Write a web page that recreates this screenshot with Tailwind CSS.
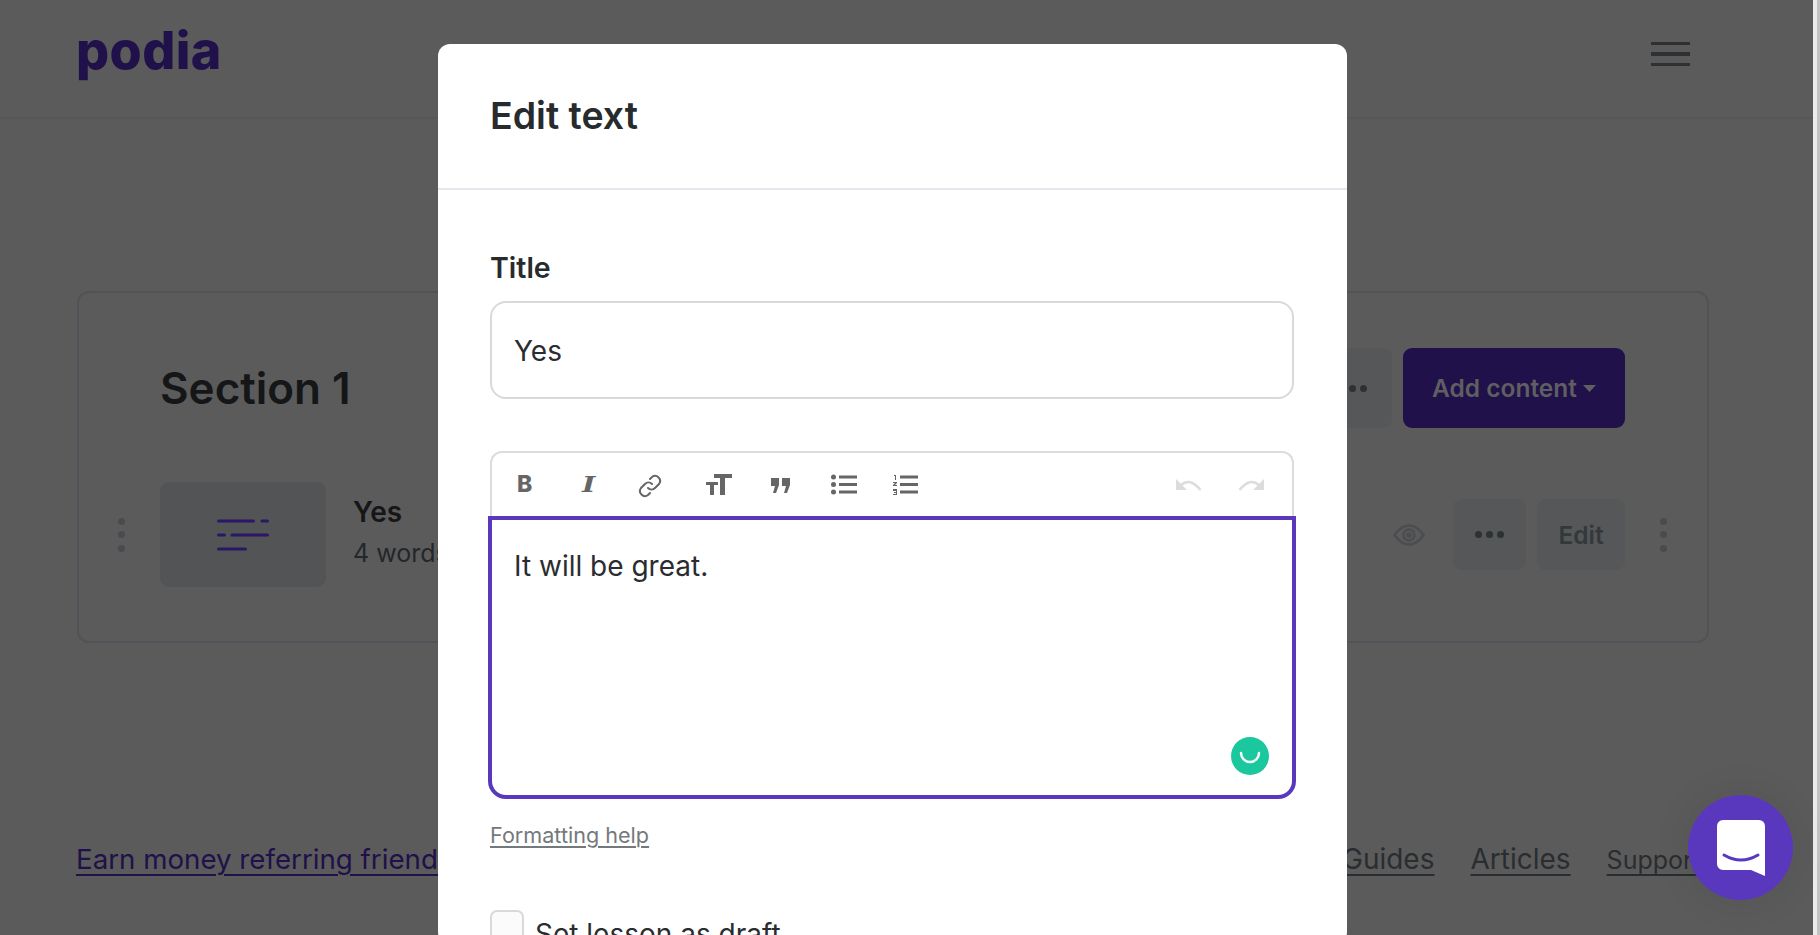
<!DOCTYPE html>
<html lang="en">
<head>
<meta charset="utf-8">
<title>Edit text</title>
<script src="https://cdn.jsdelivr.net/npm/@tailwindcss/browser@4"></script>
</head>
<body class="m-0 h-[935px] w-[1820px] overflow-hidden bg-[#5b5b5b] font-['Inter',sans-serif]">
<div class="relative flex h-[935px] w-[1820px] overflow-hidden">
  <main class="w-[1813px] shrink-0">
    <header class="flex h-[119px] items-start justify-between border-b-2 border-[#56565c] pl-[76px] pr-[123px]">
      <span class="mt-[17px] text-[52px] leading-[68px] font-extrabold tracking-[0.4px] text-[#20114a]">podia</span>
      <div class="mt-[42px] flex w-[39px] flex-col gap-[7px]">
        <span class="h-[3px] bg-[#2e3134]"></span>
        <span class="h-[4px] bg-[#2e3134]"></span>
        <span class="h-[3px] bg-[#2e3134]"></span>
      </div>
    </header>

    <section class="ml-[77px] mt-[172px] h-[352px] w-[1632px] rounded-[12px] border-2 border-[#525258] pl-[81px] pr-[82px] pt-[55px]">
      <div class="flex h-[80px] items-center justify-between">
        <h2 class="text-[44px] leading-[80px] font-semibold text-[#141618]">Section 1</h2>
        <div class="flex gap-[11px]">
          <div class="flex h-[80px] w-[80px] items-center justify-center gap-[4px] rounded-[9px] bg-[#555759]">
            <span class="size-[7px] rounded-full bg-[#2e3134]"></span><span class="size-[7px] rounded-full bg-[#2e3134]"></span><span class="size-[7px] rounded-full bg-[#2e3134]"></span>
          </div>
          <div class="flex h-[80px] w-[222px] items-center justify-center gap-[6px] rounded-[9px] bg-[#20114a] text-[24.500px] font-semibold text-[#5f5f62]">
            Add content
            <svg width="13" height="8" viewBox="0 0 13 8" class="mt-[2px]"><path d="M0 0h13L6.500 7z" fill="#5f5f62"/></svg>
          </div>
        </div>
      </div>
      <div class="-mx-[42px] mt-[54px] flex h-[105px] items-center">
        <div class="mr-[35px] flex w-[7px] flex-col gap-[6.500px]">
          <span class="size-[7px] rounded-full bg-[#4a4b50]"></span><span class="size-[7px] rounded-full bg-[#4a4b50]"></span><span class="size-[7px] rounded-full bg-[#4a4b50]"></span>
        </div>
        <div class="flex h-[105px] w-[166px] items-center justify-center rounded-[9px] bg-[#525456]">
          <svg width="52" height="32" viewBox="0 0 52 32" fill="none" stroke="#2a1766" stroke-width="3" stroke-linecap="round"><path d="M1.500 2h35M45 2h5.500M1.500 16h6M15 16h35.500M1.500 30h27"/></svg>
        </div>
        <div class="-mt-[4px] ml-[27px]">
          <div class="text-[28px] leading-[36px] font-semibold text-[#141618]">Yes</div>
          <div class="mt-[5px] text-[25px] leading-[36px] text-[#24272a]">4 words</div>
        </div>
        <div class="ml-auto flex items-center">
          <svg width="32" height="22" viewBox="0 0 32 22" fill="none" stroke="#4c4d50" stroke-width="2.500" class="mr-[28px]"><path d="M1.500 11C6 4.500 11 1.500 16 1.500S26 4.500 30.500 11C26 17.500 21 20.500 16 20.500S6 17.500 1.500 11Z"/><circle cx="16" cy="11" r="5.500"/><circle cx="16" cy="11" r="1.500" fill="#4c4d50"/></svg>
          <div class="flex h-[71px] w-[73px] items-center justify-center gap-[4px] rounded-[9px] bg-[#555759]">
            <span class="size-[7px] rounded-full bg-[#2e3134]"></span><span class="size-[7px] rounded-full bg-[#2e3134]"></span><span class="size-[7px] rounded-full bg-[#2e3134]"></span>
          </div>
          <div class="ml-[11px] flex h-[71px] w-[88px] items-center justify-center rounded-[9px] bg-[#555759] pt-[1px] text-[24.500px] font-semibold text-[#33393a]">Edit</div>
          <div class="ml-[35px] flex w-[7px] flex-col gap-[6.500px]">
            <span class="size-[7px] rounded-full bg-[#4a4b50]"></span><span class="size-[7px] rounded-full bg-[#4a4b50]"></span><span class="size-[7px] rounded-full bg-[#4a4b50]"></span>
          </div>
        </div>
      </div>
    </section>

    <footer class="mt-[196px] flex items-center pl-[76px] text-[28px] leading-[36px] text-[#2a2d30]">
      <a class="w-[1266px] shrink-0 text-[27.700px] text-[#20114a] underline underline-offset-[5px] decoration-2">Earn money referring friends</a>
      <a class="underline underline-offset-[5px] decoration-2">Guides</a>
      <a class="ml-[36px] underline underline-offset-[5px] decoration-2">Articles</a>
      <a class="ml-[36px] mt-[3px] text-[25px] underline underline-offset-[5px] decoration-2">Support</a>
    </footer>
  </main>

  <div class="flex w-[7px] shrink-0">
    <div class="w-[4px] bg-[#ececec]"></div>
    <div class="w-[3px] bg-[#c2c2c2]"></div>
  </div>

  <div role="dialog" class="absolute left-[438px] top-[44px] h-[900px] w-[909px] rounded-[12px] bg-white">
    <div class="flex h-[146px] items-center border-b-2 border-[#e4e7ec] pl-[52px]">
      <h1 class="text-[37.500px] font-semibold text-[#282b2e]">Edit text</h1>
    </div>
    <div class="pl-[52px] pr-[53px]">
      <label class="mt-[58px] block text-[28.500px] leading-[40px] font-semibold text-[#282b2e]">Title</label>
      <div class="mt-[13px] flex h-[98px] items-center rounded-[16px] border-2 border-[#d9d9d9] pl-[22px] pt-[2px] text-[28px] text-[#2a2d30]">Yes</div>

      <div class="relative mt-[52px]">
        <div class="flex h-[70px] w-[804px] rounded-t-[12px] border-x-2 border-t-2 border-[#dcdcdc] text-[#666666]">
          <div class="relative h-full w-full">
            <span class="absolute left-[25px] top-[16px] text-[23px] leading-[30px] font-extrabold">B</span>
            <span class="absolute left-[90px] top-[16px] origin-left scale-x-[1.300] font-['DejaVu_Serif',serif] text-[22px] leading-[30px] font-bold italic">I</span>
            <svg class="absolute left-[146px] top-[21px]" width="24" height="24" viewBox="0 0 24 24" fill="none" stroke="#666" stroke-width="2" stroke-linecap="round"><path d="M10 14a5 5 0 0 0 7 0l4-4a5 5 0 0 0-7-7l-2 2"/><path d="M14 10a5 5 0 0 0-7 0l-4 4a5 5 0 0 0 7 7l2-2"/></svg>
            <svg class="absolute left-[214px] top-[21px]" width="26" height="21" viewBox="0 0 26 21" fill="#666"><path d="M8 0h18v4h-7v17h-5V4H8zM0 8h12v3H8v10H4V11H0z"/></svg>
            <svg class="absolute left-[279px] top-[25px]" width="20" height="15" viewBox="0 0 20 15" fill="#666"><path d="M0 0h8v7l-3 8H2l2-7H0zM11 0h8v7l-3 8h-3l2-7h-4z"/></svg>
            <svg class="absolute left-[339px] top-[21px]" width="26" height="21" viewBox="0 0 26 21" fill="#666"><circle cx="2.500" cy="3" r="2.500"/><circle cx="2.500" cy="10.500" r="2.500"/><circle cx="2.500" cy="18" r="2.500"/><path d="M8 1.500h18v3H8zM8 9h18v3H8zM8 16.500h18v3H8z"/></svg>
            <svg class="absolute left-[401px] top-[21px]" width="25" height="21" viewBox="0 0 25 21" fill="#666"><path d="M7 1.500h18v3H7zM7 9h18v3H7zM7 16.500h18v3H7zM1 1h2v5H2V2H1zM0 8h4v1l-2 2h2v1H0v-1l2-2H0zM0 15h4v6H0v-1h3v-1H1v-1h2v-1H0z"/></svg>
            <svg class="absolute right-[90px] top-[26px]" width="26" height="12" viewBox="0 0 26 12"><path d="M0 0v11h11z" fill="#dcdcdc"/><path d="M5 6Q14-2 24.500 11" fill="none" stroke="#dcdcdc" stroke-width="2.500"/></svg>
            <svg class="absolute right-[28px] top-[26px]" width="26" height="12" viewBox="0 0 26 12"><path d="M26 0v11H15z" fill="#dcdcdc"/><path d="M21 6Q12-2 1.500 11" fill="none" stroke="#dcdcdc" stroke-width="2.500"/></svg>
          </div>
        </div>
        <div class="relative -ml-[2px] -mt-[5px] h-[283px] w-[808px] rounded-b-[18px] border-4 border-[#5a38bd] pl-[22px] pt-[26px] text-[28px] leading-[40px] text-[#2a2d30]">
          It will be great.
          <div class="absolute bottom-[20px] right-[23px] flex size-[38px] items-center justify-center rounded-full bg-[#1bc89d]">
            <svg width="24" height="16" viewBox="0 0 24 16" fill="none" stroke="#f4faf8" stroke-width="2.500" stroke-linecap="round" class="mt-[6px]"><path d="M3 2a9 9 0 0 0 18 0"/></svg>
          </div>
        </div>
      </div>

      <a class="mt-[22px] block w-fit text-[21.600px] leading-[28px] text-[#74797d] underline underline-offset-[3px] decoration-2">Formatting help</a>
      <div class="mt-[61px] flex items-start">
        <span class="h-[34px] w-[34px] shrink-0 rounded-[7px] border-2 border-[#d9d9d9] bg-[#fbfbfb]"></span>
        <span class="ml-[11px] mt-[6px] text-[28px] leading-[36px] text-[#2a2d30]">Set lesson as draft</span>
      </div>
    </div>
  </div>

  <div class="absolute left-[1688px] top-[795px] flex size-[105px] items-center justify-center rounded-full bg-[#5a38bd] shadow-[0_0_40px_rgba(0,0,0,0.08)]">
    <svg width="48" height="56" viewBox="0 0 48 56" class="mt-[1px]"><path d="M6 0h36a6 6 0 0 1 6 6v50l-14-6H6a6 6 0 0 1-6-6V6a6 6 0 0 1 6-6z" fill="#fff"/><path d="M7 35q17 10 34 0" fill="none" stroke="#5a38bd" stroke-width="3" stroke-linecap="round"/></svg>
  </div>
</div>
</body>
</html>
